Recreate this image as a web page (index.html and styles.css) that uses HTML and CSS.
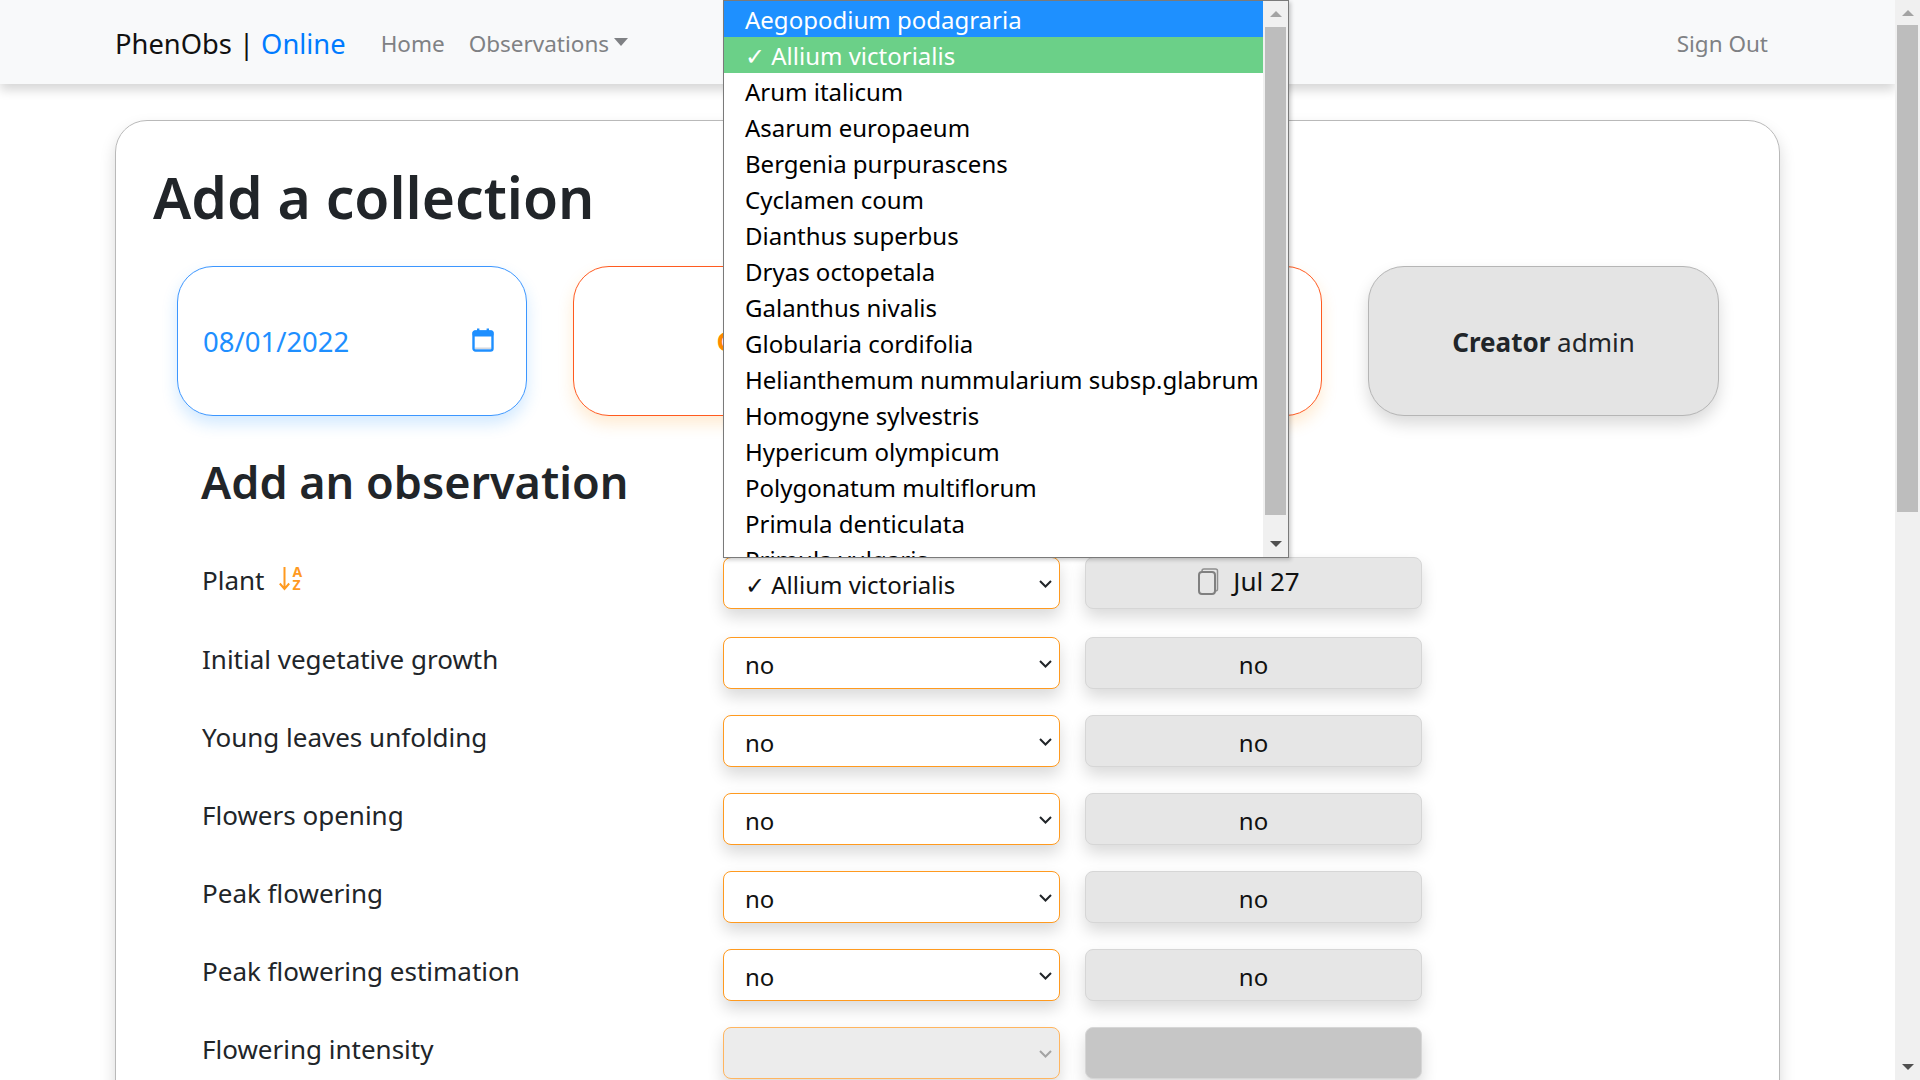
FILE: index.html
```html
<!DOCTYPE html>
<html lang="en">
<head>
    <meta charset="UTF-8">
    <meta name="viewport" content="width=device-width, initial-scale=1.0">
    <title>PhenObs | Online</title>
    <link rel="stylesheet" href="styles.css">
</head>
<body>

    <div class="page">
        <nav class="navbar">
            <a class="brand">PhenObs | <span class="brand-accent">Online</span></a>
            <a class="nav-link">Home</a>
            <a class="nav-link nav-dropdown">Observations<span class="caret"></span></a>
            <a class="nav-link nav-right">Sign Out</a>
        </nav>

        <main class="card">
            <h1 class="title">Add a collection</h1>

            <div class="info-row">
                <div class="info-box date-box">
                    <span>08/01/2022</span>
                    <svg class="calendar-icon" width="22" height="24" viewBox="0 0 22 24">
                        <path d="M5 0.5h2.4v3H5zM14.6 0.5H17v3h-2.4z" fill="#1e8fff"/>
                        <rect x="1.5" y="3.5" width="19" height="19" rx="2" fill="#fff" stroke="#1e8fff" stroke-width="2.4"/>
                        <rect x="0.5" y="2.5" width="21" height="6" rx="2" fill="#1e8fff"/>
                        <rect x="3" y="19.5" width="16" height="1.6" fill="#d5d8de"/>
                    </svg>
                </div>
                <div class="info-box garden-box">
                    <span class="garden-name">Garden collection online</span>
                </div>
                <div class="info-box creator-box"><strong>Creator</strong>&nbsp;admin</div>
            </div>

            <h2 class="subtitle">Add an observation</h2>

            <div class="obs-grid">
                <div class="obs-label obs-first">Plant
                    <svg class="sort-icon" width="23" height="25" viewBox="0 0 23 25">
                        <path d="M5.500 1v22M0.800 17.500l4.700 5.500 4.700-5.500" fill="none" stroke="#ff9a1f" stroke-width="2"/>
                        <text x="13.500" y="11" class="sort-letter">A</text>
                        <text x="13.500" y="24" class="sort-letter">Z</text>
                    </svg>
                </div>
                <select class="obs-select select-plant obs-first"><option>✓ Allium victorialis</option></select>
                <div class="obs-value value-plant obs-first">
                    <svg class="copy-icon" width="22" height="27" viewBox="0 0 22 27">
                        <path d="M5 3.500V3a2 2 0 0 1 2-2h11.500a2 2 0 0 1 2 2v18a2 2 0 0 1-2 2H18" fill="none" stroke="#8f8f8f" stroke-width="1.500"/>
                        <rect x="2" y="4" width="16" height="22" rx="3" fill="#e6e6e6" stroke="#808080" stroke-width="2"/>
                    </svg>
                    Jul 27
                </div>

                <div class="obs-label">Initial vegetative growth</div>
                <select class="obs-select"><option>no</option></select>
                <div class="obs-value">no</div>

                <div class="obs-label">Young leaves unfolding</div>
                <select class="obs-select"><option>no</option></select>
                <div class="obs-value">no</div>

                <div class="obs-label">Flowers opening</div>
                <select class="obs-select"><option>no</option></select>
                <div class="obs-value">no</div>

                <div class="obs-label">Peak flowering</div>
                <select class="obs-select"><option>no</option></select>
                <div class="obs-value">no</div>

                <div class="obs-label">Peak flowering estimation</div>
                <select class="obs-select"><option>no</option></select>
                <div class="obs-value">no</div>

                <div class="obs-label">Flowering intensity</div>
                <select class="obs-select" disabled><option></option></select>
                <div class="obs-value value-empty"></div>
            </div>
        </main>
    </div>

    <div class="scrollbar page-scrollbar">
        <span class="arrow-up"></span>
        <div class="thumb page-thumb"></div>
        <span class="arrow-down"></span>
    </div>

    <!-- the open plant select, lies over the page -->
    <div class="popup">
        <ul class="popup-list">
            <li class="active">Aegopodium podagraria</li>
            <li class="picked">✓ Allium victorialis</li>
            <li>Arum italicum</li>
            <li>Asarum europaeum</li>
            <li>Bergenia purpurascens</li>
            <li>Cyclamen coum</li>
            <li>Dianthus superbus</li>
            <li>Dryas octopetala</li>
            <li>Galanthus nivalis</li>
            <li>Globularia cordifolia</li>
            <li>Helianthemum nummularium subsp.glabrum</li>
            <li>Homogyne sylvestris</li>
            <li>Hypericum olympicum</li>
            <li>Polygonatum multiflorum</li>
            <li>Primula denticulata</li>
            <li>Primula vulgaris</li>
        </ul>
        <div class="scrollbar popup-scrollbar">
            <span class="arrow-up"></span>
            <div class="thumb popup-thumb"></div>
            <span class="arrow-down"></span>
        </div>
    </div>

</body>
</html>
```

FILE: styles.css
```css
* {
    box-sizing: border-box;
}
html, body {
    height: 100%;
}
body {
    margin: 0;
    display: flex;
    height: 1080px;
    overflow: hidden;
    background-color: #fff;
    color: #212529;
    font-family: "Noto Sans", "Open Sans", sans-serif;
    font-size: 24px;
}
.page {
    flex: 1;
    height: 1080px;
    overflow: hidden;
}

/* navbar */
.navbar {
    display: flex;
    align-items: center;
    height: 84px;
    padding: 2px 127px 0 115px;
    background-color: #f8f9fa;
    box-shadow: 0 6px 10px rgba(0, 0, 0, 0.16);
    font-size: 22.5px;
}
.brand {
    font-size: 27.3px;
    color: #111;
    margin-right: 35px;
}
.brand-accent {
    color: #007bff;
}
.nav-link {
    color: #7f8184;
    margin-right: 24px;
}
.nav-dropdown {
    display: flex;
    align-items: center;
}
.caret {
    width: 0;
    height: 0;
    margin: -3px 0 0 5px;
    border-top: 8px solid #7f8184;
    border-left: 7px solid transparent;
    border-right: 7px solid transparent;
}
.nav-right {
    margin-left: auto;
    margin-right: 0;
}

/* main card */
.card {
    width: 1665px;
    height: 1100px;
    margin: 36px 0 0 115px;
    padding: 37px 37px 0;
    border: 1.5px solid #b9b9b9;
    border-radius: 32px;
    box-shadow: 0 8px 16px rgba(0, 0, 0, 0.15);
}
.title {
    margin: 0 0 30px;
    font-size: 57px;
    line-height: 78px;
    font-weight: 600;
}
.info-row {
    display: flex;
    gap: 46px;
    margin-left: 24px;
}
.info-box {
    display: flex;
    align-items: center;
    height: 150px;
    border-radius: 36px;
    border: 1.5px solid #b5b5b5;
    box-shadow: 0 8px 16px rgba(0, 0, 0, 0.15);
    font-size: 26px;
}
.date-box {
    width: 350px;
    justify-content: space-between;
    padding: 0 32px 0 25px;
    border-color: #3b96ff;
    color: #1e8fff;
    font-size: 27.5px;
    box-shadow: 0 8px 16px rgba(30, 144, 255, 0.2);
}
.calendar-icon {
    margin-top: -3px;
}
.garden-box {
    width: 749px;
    justify-content: center;
    border-color: #ff5a1f;
    box-shadow: 0 8px 16px rgba(255, 154, 31, 0.2);
}
.garden-name {
    min-width: 462px;
    color: #ff8a00;
    font-weight: 700;
}
.creator-box {
    width: 351px;
    padding-top: 2px;
    justify-content: center;
    background-color: #e4e4e4;
}
.subtitle {
    margin: 36px 0 47px 48px;
    font-size: 45px;
    line-height: 60px;
    font-weight: 600;
}

/* observation rows */
.obs-grid {
    display: grid;
    grid-template-columns: 496px 337px 337px;
    grid-auto-rows: 52px;
    column-gap: 25px;
    row-gap: 26px;
    margin-left: 49px;
}
.obs-first {
    margin-top: -2px;
}
.obs-label {
    display: flex;
    align-items: center;
    gap: 15px;
    padding-bottom: 8px;
    font-size: 26px;
}
.obs-select {
    appearance: none;
    height: 52px;
    padding: 2px 40px 0 21px;
    border: 1.5px solid #ff9a1f;
    border-radius: 8px;
    background: #fff url("data:image/svg+xml,%3Csvg xmlns='http://www.w3.org/2000/svg' viewBox='0 0 13 8'%3E%3Cpath d='M1 1l5.500 5.500L12 1' fill='none' stroke='%23212529' stroke-width='2'/%3E%3C/svg%3E") no-repeat right 7px top 22px / 13px 8px;
    box-shadow: 0 8px 16px rgba(0, 0, 0, 0.15);
    color: #111;
    font: inherit;
}
.obs-select:disabled {
    opacity: 1;
    background-color: #ececec;
    border-color: #ffb55f;
    background-image: url("data:image/svg+xml,%3Csvg xmlns='http://www.w3.org/2000/svg' viewBox='0 0 13 8'%3E%3Cpath d='M1 1l5.500 5.500L12 1' fill='none' stroke='%23a3a3a3' stroke-width='2'/%3E%3C/svg%3E");
}
.obs-value {
    display: flex;
    align-items: center;
    justify-content: center;
    height: 52px;
    padding-top: 2px;
    border: 1.5px solid #d6d6d6;
    border-radius: 8px;
    background-color: #e6e6e6;
    box-shadow: 0 8px 16px rgba(0, 0, 0, 0.15);
    color: #111;
}
.value-plant {
    gap: 14px;
    padding: 0 10px 4px 0;
    font-size: 26px;
}
.value-empty {
    background-color: #c6c6c6;
}
.copy-icon {
    flex-shrink: 0;
}
.sort-icon {
    margin-top: -4px;
    overflow: visible;
}
.sort-letter {
    fill: #ff9a1f;
    font-size: 14px;
    font-weight: 700;
}

/* fake scrollbars */
.scrollbar {
    display: flex;
    flex-direction: column;
    align-items: center;
    flex-shrink: 0;
    width: 25px;
    background-color: #f0f0f0;
}
.page-scrollbar {
    height: 1080px;
}
.thumb {
    width: 21px;
    background-color: #bdbdbd;
}
.page-thumb {
    height: 487px;
    margin-top: 15px;
}
.popup-thumb {
    height: 488px;
    margin-top: 16px;
}
.arrow-up, .arrow-down {
    width: 0;
    height: 0;
    border-left: 6px solid transparent;
    border-right: 6px solid transparent;
}
.arrow-up {
    margin-top: 10px;
    border-bottom: 6px solid #a3a3a3;
    margin-bottom: -6px;
}
.page-scrollbar .arrow-down, .popup-scrollbar .arrow-down {
    margin-top: auto;
    margin-bottom: 10px;
    border-top: 6px solid #505050;
}

/* open select popup */
.popup {
    position: absolute;
    top: 0;
    left: 723px;
    display: flex;
    width: 566px;
    height: 558px;
    overflow: hidden;
    border: 1.5px solid #7a7a7a;
    background-color: #fff;
    box-shadow: 2px 2px 4px rgba(0, 0, 0, 0.2);
    color: #000;
}
.popup-list {
    flex: 1;
    min-width: 0;
    margin: 0;
    padding: 0;
    list-style: none;
}
.popup-list li {
    height: 36px;
    padding-left: 21px;
    line-height: 37px;
    white-space: nowrap;
}
.popup-list .active {
    background-color: #1e90ff;
    color: #fff;
}
.popup-list .picked {
    background-color: #6bd088;
    color: #fff;
}
```
